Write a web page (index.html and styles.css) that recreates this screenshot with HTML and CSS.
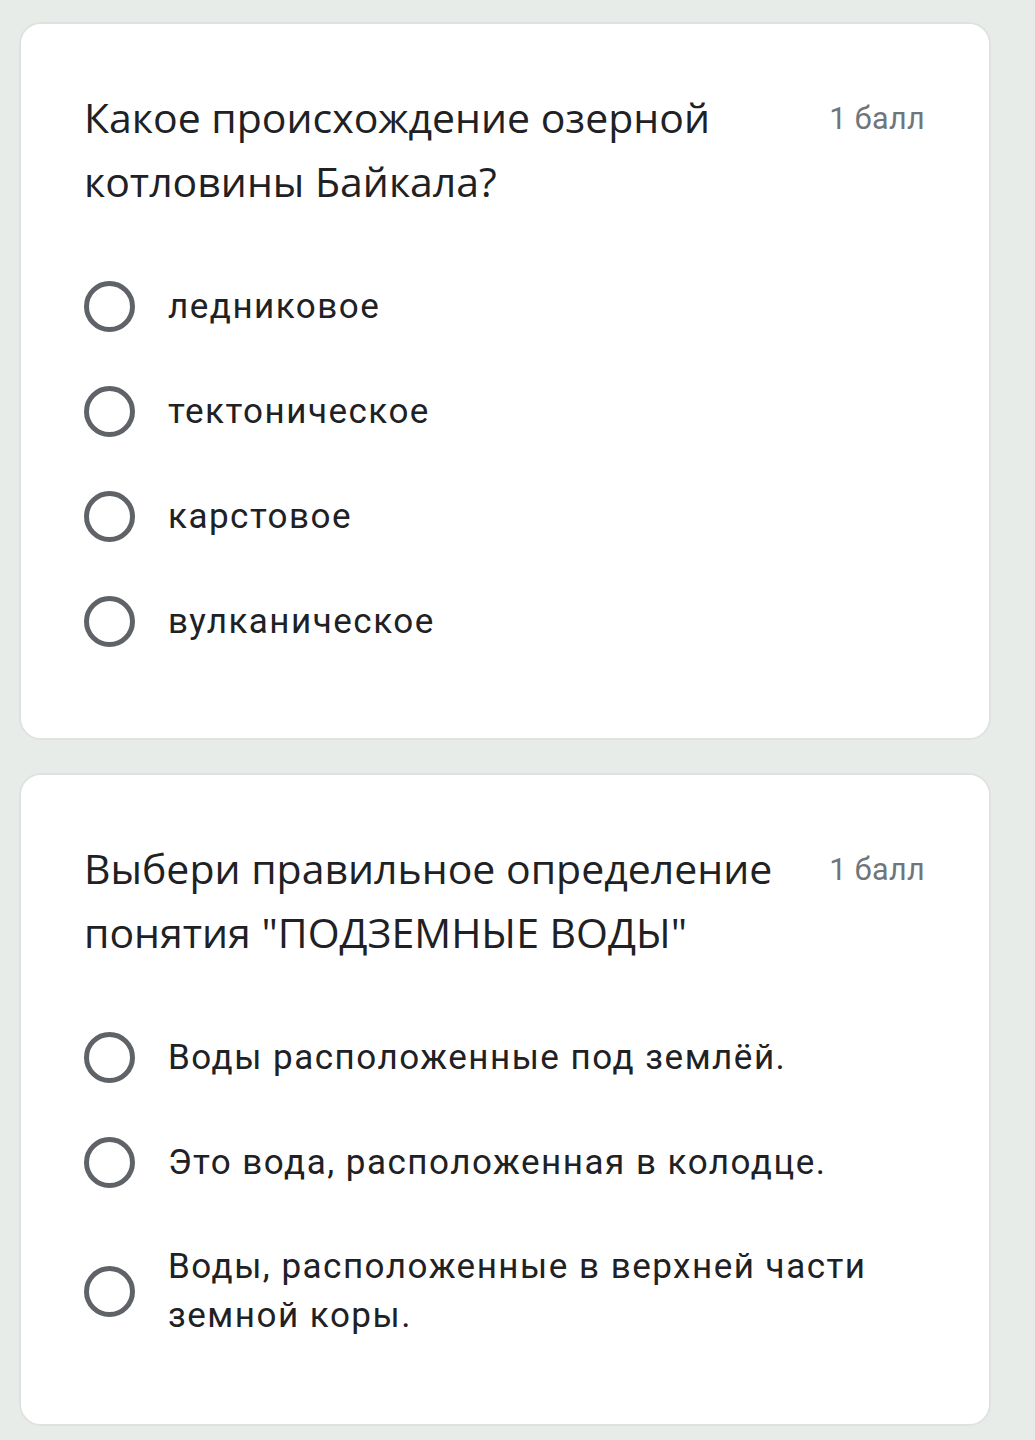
FILE: index.html
```html
<!DOCTYPE html>
<html lang="ru">
<head>
<meta charset="utf-8">
<title>Форма</title>
<link rel="stylesheet" href="styles.css">
</head>
<body>
<main class="form">
  <section class="card">
    <div class="card-head">
      <h2 class="question">Какое происхождение озерной котловины Байкала?</h2>
      <span class="points">1 балл</span>
    </div>
    <ul class="options">
      <li class="option"><span class="radio"></span><span class="label">ледниковое</span></li>
      <li class="option"><span class="radio"></span><span class="label">тектоническое</span></li>
      <li class="option"><span class="radio"></span><span class="label">карстовое</span></li>
      <li class="option"><span class="radio"></span><span class="label">вулканическое</span></li>
    </ul>
  </section>
  <section class="card card-second">
    <div class="card-head">
      <h2 class="question">Выбери правильное определение понятия "ПОДЗЕМНЫЕ ВОДЫ"</h2>
      <span class="points">1 балл</span>
    </div>
    <ul class="options">
      <li class="option"><span class="radio"></span><span class="label">Воды расположенные под землёй.</span></li>
      <li class="option"><span class="radio"></span><span class="label">Это вода, расположенная в колодце.</span></li>
      <li class="option"><span class="radio"></span><span class="label">Воды, расположенные в верхней части земной коры.</span></li>
    </ul>
  </section>
</main>
</body>
</html>
```
FILE: styles.css
```css
* { box-sizing: border-box; }

html, body {
  margin: 0;
  background: #e8ece9;
}

body {
  padding: 22px 44px 0 19px;
  font-family: Roboto, "Noto Sans", sans-serif;
  color: #202124;
}

.form {
  display: flex;
  flex-direction: column;
  gap: 33px;
}

.card {
  background: #ffffff;
  border: 2px solid #dfe2e0;
  border-radius: 22px;
  padding: 61px 64px 64px 63px;
}

.card-second {
  padding-bottom: 57px;
}

.card-head {
  display: flex;
  align-items: flex-start;
  gap: 40px;
}

.question {
  flex: 1;
  margin: 0;
  font-family: "Open Sans", "Noto Sans", sans-serif;
  font-weight: 400;
  font-size: 41px;
  line-height: 64px;
  color: #202124;
}

.points {
  flex: none;
  padding-top: 2px;
  font-family: Roboto, sans-serif;
  font-size: 30.5px;
  line-height: 64px;
  color: #70757a;
  letter-spacing: 0.4px;
}

.options {
  list-style: none;
  margin: 41px 0 0;
  padding: 0;
}

.option {
  display: flex;
  align-items: center;
  gap: 33px;
  padding: 27px 0;
}

.radio {
  flex: none;
  width: 51px;
  height: 51px;
  border: 5px solid #5f6368;
  border-radius: 50%;
}

.label {
  font-family: Roboto, sans-serif;
  font-size: 35px;
  line-height: 49px;
  letter-spacing: 1.5px;
  color: #202124;
}
```
